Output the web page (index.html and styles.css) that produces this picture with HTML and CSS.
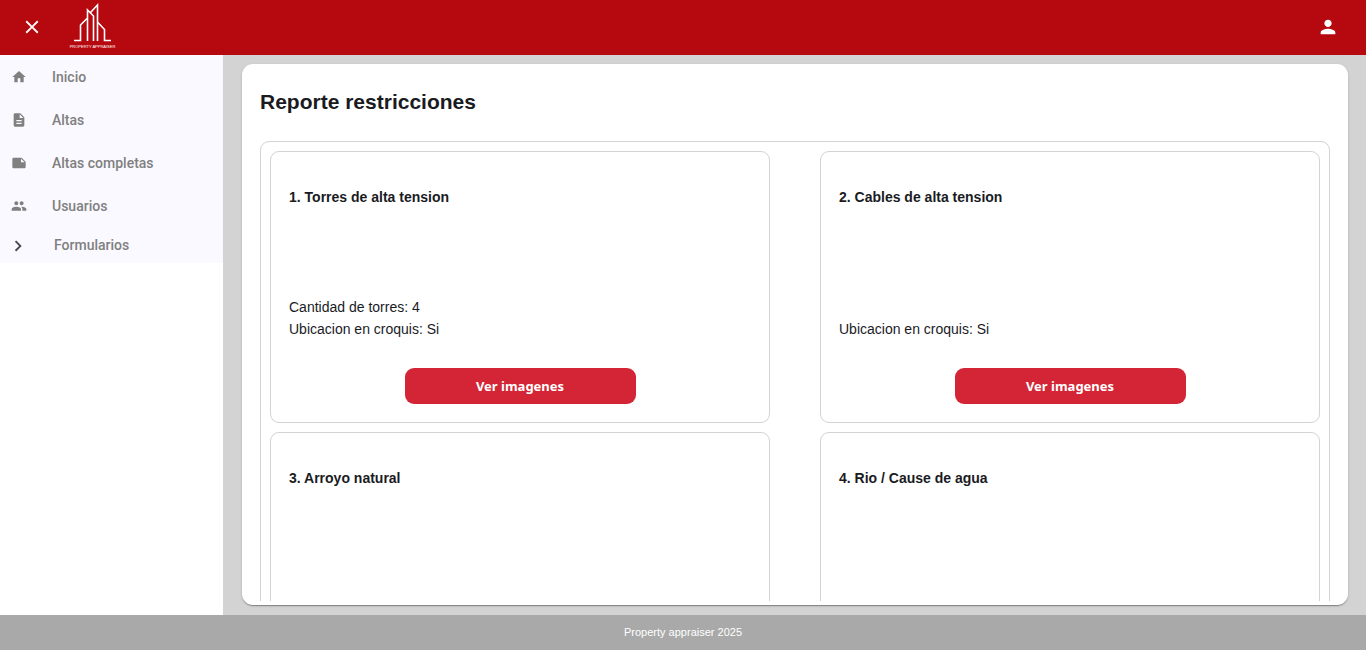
FILE: index.html
```html
<!DOCTYPE html>
<html lang="es">
<head>
<meta charset="utf-8">
<meta name="viewport" content="width=device-width, initial-scale=1">
<title>Property appraiser</title>
<link rel="stylesheet" href="styles.css">
</head>
<body>
<header class="topbar">
  <div class="topbar-start">
    <button class="icon-button" type="button" aria-label="Cerrar menú">
      <svg width="22" height="22" viewBox="0 0 24 24" fill="currentColor"><path d="M19 6.41 17.59 5 12 10.59 6.41 5 5 6.41 10.59 12 5 17.59 6.41 19 12 13.41 17.59 19 19 17.59 13.41 12z"/></svg>
    </button>
    <a class="logo" href="#" aria-label="Property Appraiser">
      <svg width="52" height="55" viewBox="0 0 52 55">
        <path d="M8 40.500h6.500V25l6.500-6.500 M21.500 41V10l6 6V41 M24.500 12.500 31.500 5V41 M31.500 22l7 7.500v11H45" fill="none" stroke="#fff" stroke-width="1.600"/>
        <text class="logo-text" x="26.500" y="47.500" text-anchor="middle">PROPERTY APPRAISER</text>
      </svg>
    </a>
  </div>
  <button class="icon-button" type="button" aria-label="Cuenta">
    <svg width="22" height="22" viewBox="0 0 24 24" fill="currentColor"><path d="M12 12c2.210 0 4-1.790 4-4s-1.790-4-4-4-4 1.790-4 4 1.790 4 4 4zm0 2c-2.670 0-8 1.340-8 4v2h16v-2c0-2.660-5.330-4-8-4z"/></svg>
  </button>
</header>

<div class="layout">
  <aside class="sidebar">
    <nav class="menu">
      <a class="menu-item" href="#"><svg class="menu-icon" viewBox="0 0 24 24"><path d="M10 20v-6h4v6h5v-8h3L12 3 2 12h3v8z"/></svg>Inicio</a>
      <a class="menu-item" href="#"><svg class="menu-icon" viewBox="0 0 24 24"><path d="M14 2H6c-1.100 0-2 .9-2 2v16c0 1.100.9 2 2 2h12c1.100 0 2-.9 2-2V8l-6-6zm2 16H8v-2h8v2zm0-4H8v-2h8v2zm-3-5V3.500L18.500 9H13z"/></svg>Altas</a>
      <a class="menu-item" href="#"><svg class="menu-icon" viewBox="0 0 24 24"><path d="M22 10l-6-6H4c-1.100 0-2 .9-2 2v12.010c0 1.100.9 1.990 2 1.990h16c1.100 0 2-.9 2-2v-8zm-7-4.500l5.500 5.500H15V5.500z"/></svg>Altas completas</a>
      <a class="menu-item" href="#"><svg class="menu-icon" viewBox="0 0 24 24"><path d="M16 11c1.660 0 2.990-1.340 2.990-3S17.660 5 16 5s-3 1.340-3 3 1.340 3 3 3zm-8 0c1.660 0 2.990-1.340 2.990-3S9.660 5 8 5 5 6.340 5 8s1.340 3 3 3zm0 2c-2.330 0-7 1.170-7 3.500V19h14v-2.500c0-2.330-4.670-3.500-7-3.500zm8 0c-.29 0-.62.02-.97.05 1.160.84 1.970 1.970 1.970 3.450V19h6v-2.500c0-2.330-4.670-3.500-7-3.500z"/></svg>Usuarios</a>
      <button class="menu-toggle" type="button" aria-expanded="false"><svg class="toggle-icon" viewBox="0 0 24 24"><path d="M10 7 8.590 8.410 13.170 13l-4.580 4.590L10 19l6-6z"/></svg>Formularios</button>
    </nav>
  </aside>

  <main class="content">
    <section class="sheet">
      <div class="sheet-scroll">
        <h1 class="sheet-title">Reporte restricciones</h1>
        <div class="panel">
          <article class="card">
            <h2 class="card-title">1. Torres de alta tension</h2>
            <div class="card-data"><p>Cantidad de torres: 4</p><p>Ubicacion en croquis: Si</p></div>
            <button class="card-button" type="button">Ver imagenes</button>
          </article>
          <article class="card">
            <h2 class="card-title">2. Cables de alta tension</h2>
            <div class="card-data"><p>Ubicacion en croquis: Si</p></div>
            <button class="card-button" type="button">Ver imagenes</button>
          </article>
          <article class="card">
            <h2 class="card-title">3. Arroyo natural</h2>
            <div class="card-data"></div>
          </article>
          <article class="card">
            <h2 class="card-title">4. Rio / Cause de agua</h2>
            <div class="card-data"></div>
          </article>
        </div>
      </div>
    </section>
  </main>
</div>

<footer class="footer">Property appraiser 2025</footer>
</body>
</html>
```
FILE: styles.css
```css
* {
  box-sizing: border-box;
}

body {
  display: flex;
  flex-direction: column;
  height: 100vh;
  margin: 0;
  font: 14px/22px "Liberation Sans", Arial, sans-serif;
  color: #1a1b1f;
  background: #fff;
}

h1, h2, p {
  margin: 0;
}

button {
  border: 0;
  cursor: pointer;
}

.topbar {
  display: flex;
  align-items: center;
  justify-content: space-between;
  flex: none;
  height: 55px;
  padding: 0 16px 0 10px;
  background: #b6080f;
}

.topbar-start {
  display: flex;
  align-items: center;
  gap: 12px;
}

.icon-button {
  display: grid;
  place-items: center;
  width: 44px;
  height: 44px;
  padding: 0 0 2px;
  color: #fff;
  background: none;
}

.logo svg {
  display: block;
}

.logo-text {
  font: 4px "Liberation Sans", Arial, sans-serif;
  fill: #fff;
}

.layout {
  display: flex;
  flex: 1;
  min-height: 0;
}

.sidebar {
  flex: none;
  width: 223px;
}

.menu {
  display: flex;
  flex-direction: column;
  background: #faf9ff;
}

.menu-item,
.menu-toggle {
  display: flex;
  align-items: center;
  font: 500 14px/20px Roboto, sans-serif;
  color: #808080;
  text-decoration: none;
}

.menu-item {
  gap: 25px;
  height: 43px;
  padding: 0 11px;
}

.menu-icon {
  width: 16px;
  height: 16px;
  fill: #808080;
}

.menu-toggle {
  gap: 25px;
  height: 36px;
  padding: 0 7px;
  background: none;
}

.toggle-icon {
  width: 22px;
  height: 22px;
  fill: #44474e;
}

.content {
  flex: 1;
  min-width: 0;
  padding: 9px 18px 10px 19px;
  background: #d3d3d3;
}

.sheet {
  height: 100%;
  padding: 18px 18px 4px;
  border-radius: 11px;
  background: #fff;
  box-shadow: 0 2px 1px -1px rgba(0, 0, 0, 0.2), 0 1px 1px rgba(0, 0, 0, 0.14), 0 1px 3px rgba(0, 0, 0, 0.12);
}

.sheet-scroll {
  height: 100%;
  overflow-y: auto;
  scrollbar-width: none;
}

.sheet-title {
  margin-bottom: 19px;
  font-size: 21px;
  line-height: 40px;
}

.panel {
  display: grid;
  grid-template-columns: 1fr 1fr;
  gap: 9px 50px;
  padding: 9px;
  border: 1px solid #d3d3d3;
  border-radius: 9px;
}

.card {
  display: flex;
  flex-direction: column;
  padding: 34px 18px 18px;
  border: 1px solid #d3d3d3;
  border-radius: 9px;
}

.card-title {
  font-size: 14px;
  line-height: 22px;
}

.card-data {
  display: flex;
  flex-direction: column;
  justify-content: flex-end;
  min-height: 132px;
}

.card-button {
  align-self: center;
  width: 50%;
  height: 36px;
  margin-top: 28px;
  border-radius: 9px;
  font: 700 13px/20px "Noto Sans", sans-serif;
  color: #fff;
  background: #d32535;
}

.footer {
  flex: none;
  padding: 7px;
  font-size: 11px;
  line-height: 21px;
  text-align: center;
  color: #fff;
  background: #a9a9a9;
}
```
